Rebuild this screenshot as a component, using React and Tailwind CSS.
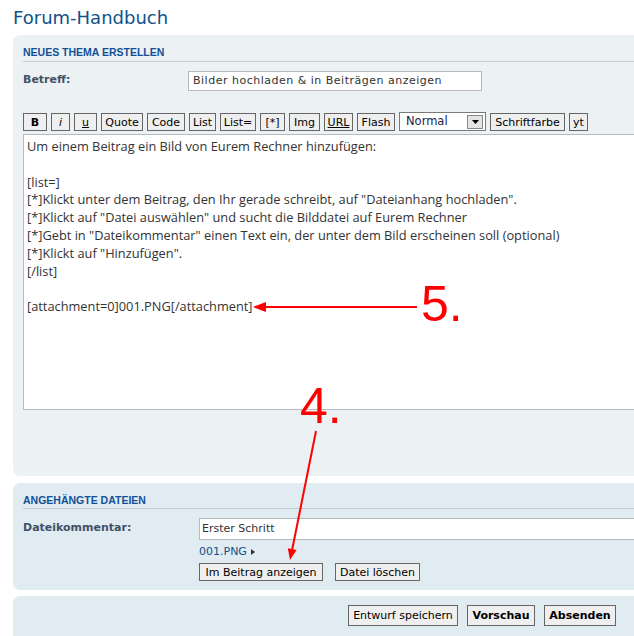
import React from 'react';

const ui = { fontFamily: '"DejaVu Sans", Verdana, sans-serif' };
const head = { fontFamily: '"Liberation Sans", Arial, sans-serif' };

const Btn = ({ className = '', children }) => (
  <div
    className={`h-[18px] shrink-0 flex items-center justify-center border border-[#666] bg-[#efefef] text-[11px] leading-none text-black ${className}`}
  >
    {children}
  </div>
);

const lines = [
  'Um einem Beitrag ein Bild von Eurem Rechner hinzufügen:',
  '',
  '[list=]',
  '[*]Klickt unter dem Beitrag, den Ihr gerade schreibt, auf "Dateianhang hochladen".',
  '[*]Klickt auf "Datei auswählen" und sucht die Bilddatei auf Eurem Rechner',
  '[*]Gebt in "Dateikommentar" einen Text ein, der unter dem Bild erscheinen soll (optional)',
  '[*]Klickt auf "Hinzufügen".',
  '[/list]',
  '',
  '[attachment=0]001.PNG[/attachment]',
];

export default function App() {
  return (
    <div className="relative w-[634px] h-[636px] overflow-hidden bg-white" style={ui}>
      <h1 className="pl-[13px] pt-[7px] h-[35px] text-[18px] leading-[21px] text-[#105289]">Forum-Handbuch</h1>

      {/* Neues Thema */}
      <div className="ml-[13px] w-[720px] h-[441px] rounded-[7px] bg-[#ecf1f3] pl-[10px] pt-[11px]">
        <div className="h-[16px] border-b border-[#c5ccd3] text-[10.5px] font-bold leading-[12px] text-[#115098]" style={head}>
          NEUES THEMA ERSTELLEN
        </div>
        <div className="flex mt-[9px] h-[20px]">
          <div className="w-[165px] pt-[1px] text-[11px] font-bold text-[#425067]">Betreff:</div>
          <div className="w-[294px] h-[20px] border border-[#b4bac0] bg-white pl-[4px] text-[11px] leading-[18px] tracking-[0.5px] text-[#333]">
            Bilder hochladen &amp; in Beiträgen anzeigen
          </div>
        </div>
        <div className="flex gap-[4px] mt-[22px]">
          <Btn className="w-[24px] font-bold">B</Btn>
          <Btn className="w-[19px] italic">i</Btn>
          <Btn className="w-[23px] underline">u</Btn>
          <Btn className="w-[42px]">Quote</Btn>
          <Btn className="w-[38px]">Code</Btn>
          <Btn className="w-[27px]">List</Btn>
          <Btn className="w-[36px]">List=</Btn>
          <Btn className="w-[25px]">[*]</Btn>
          <Btn className="w-[31px]">Img</Btn>
          <Btn className="w-[29px] underline">URL</Btn>
          <Btn className="w-[38px]">Flash</Btn>
          <div className="w-[87px] h-[19px] -mt-[1px] shrink-0 flex items-center justify-between border border-[#7a7a7a] bg-white pl-[6px] pr-[2px] text-[11.5px] text-[#1a1a4a]">
            <span>Normal</span>
            <span className="w-[16px] h-[14px] flex items-center justify-center border border-[#888] bg-[#e4e4e4]">
              <svg width="7" height="4" viewBox="0 0 7 4"><path d="M0 0h7L3.5 4z" fill="#000" /></svg>
            </span>
          </div>
          <Btn className="w-[75px]">Schriftfarbe</Btn>
          <Btn className="w-[19px]">yt</Btn>
        </div>
        <div
          className="mt-[3px] h-[276px] border border-[#b4bac0] bg-white pl-[3px] pt-[3px] text-[12.8px] leading-[17.8px] text-[#333] whitespace-pre"
          style={{ fontFamily: '"Open Sans", sans-serif' }}
        >
          {lines.map((l, i) => (
            <div key={i} className="h-[17.8px]">{l}</div>
          ))}
        </div>
      </div>

      {/* Angehängte Dateien */}
      <div className="ml-[13px] mt-[7px] w-[720px] h-[107px] rounded-[7px] bg-[#e1ebf2] pl-[10px] pt-[11px]">
        <div className="h-[15px] border-b border-[#c5ccd3] text-[10.5px] font-bold leading-[12px] text-[#115098]" style={head}>
          ANGEHÄNGTE DATEIEN
        </div>
        <div className="flex mt-[9px]">
          <div className="w-[176px] pt-[2px] text-[11px] font-bold text-[#425067]">Dateikommentar:</div>
          <div>
            <div className="w-[480px] h-[22px] border border-[#b4bac0] bg-white pl-[2px] text-[11px] leading-[20px] text-[#333]">
              Erster Schritt
            </div>
            <div className="mt-[5px] h-[13px] flex items-center gap-[4px] text-[11px] leading-[13px] text-[#105289]">
              001.PNG
              <svg width="4" height="6" viewBox="0 0 4 6"><path d="M0 0l4 3-4 3z" fill="#333" /></svg>
            </div>
            <div className="flex gap-[12px] mt-[5px]">
              <Btn className="w-[124px]">Im Beitrag anzeigen</Btn>
              <Btn className="w-[85px]">Datei löschen</Btn>
            </div>
          </div>
        </div>
      </div>

      {/* Buttons */}
      <div className="ml-[13px] mt-[6px] w-[720px] h-[60px] rounded-[7px] bg-[#e1ebf2] pt-[9px] pl-[335px] flex gap-[9px]">
        <Btn className="w-[110px] h-[21px]">Entwurf speichern</Btn>
        <Btn className="w-[68px] h-[21px] font-bold">Vorschau</Btn>
        <Btn className="w-[72px] h-[21px] font-bold">Absenden</Btn>
      </div>

      {/* Annotations */}
      <svg className="absolute left-0 top-0 pointer-events-none" width="634" height="636">
        <line x1="417" y1="307" x2="262" y2="307" stroke="#ff0000" strokeWidth="2" />
        <polygon points="253,307 266,302 266,312" fill="#ff0000" />
        <line x1="316" y1="431" x2="292.2" y2="549.5" stroke="#ff0000" strokeWidth="2" />
        <polygon points="290,560 296.6,550.1 287.8,548.3" fill="#ff0000" />
      </svg>
      <div className="absolute left-[421px] top-[276px] text-[50px] leading-[56px] text-[#ff0000]" style={head}>5.</div>
      <div className="absolute left-[300px] top-[378px] text-[50px] leading-[56px] text-[#ff0000]" style={head}>4.</div>
    </div>
  );
}
